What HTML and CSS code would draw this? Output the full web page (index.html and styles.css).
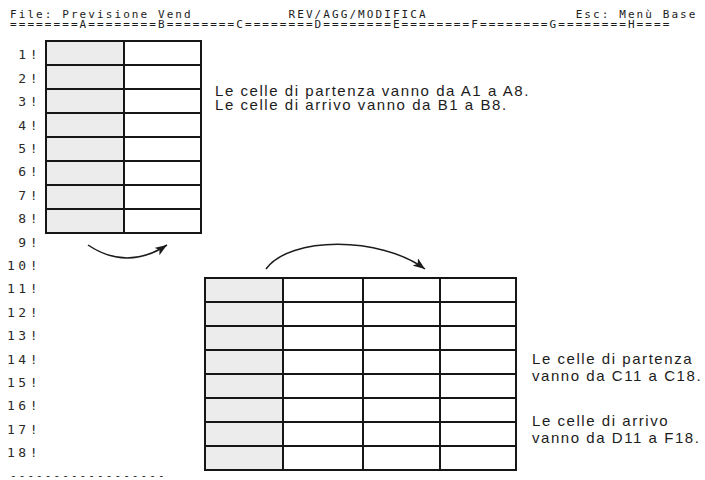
FILE: index.html
```html
<!DOCTYPE html>
<html lang="it">
<head>
  <meta charset="UTF-8">
  <meta name="viewport" content="width=device-width, initial-scale=1.0">
  <title>Previsione Vend - REV/AGG/MODIFICA</title>
  <link rel="stylesheet" href="styles.css">
</head>
<body>
  <!-- Status line and column ruler -->
  <header class="topbar">
    <div class="status">File: Previsione Vend           REV/AGG/MODIFICA                 Esc: Menù Base</div>
    <div class="ruler">========A========B========C========D========E========F========G========H====</div>
  </header>

  <div class="main">
    <!-- Row numbers -->
    <div class="rows">
      <div>1!</div><div>2!</div><div>3!</div><div>4!</div><div>5!</div><div>6!</div>
      <div>7!</div><div>8!</div><div>9!</div><div>10!</div><div>11!</div><div>12!</div>
      <div>13!</div><div>14!</div><div>15!</div><div>16!</div><div>17!</div><div>18!</div>
    </div>

    <div class="sheet">
      <!-- First example: A1:A8 -> B1:B8 -->
      <div class="upper">
        <div class="grid grid-ab">
          <div class="src"></div><div></div>
          <div class="src"></div><div></div>
          <div class="src"></div><div></div>
          <div class="src"></div><div></div>
          <div class="src"></div><div></div>
          <div class="src"></div><div></div>
          <div class="src"></div><div></div>
          <div class="src"></div><div></div>
        </div>
        <p class="note">Le celle di partenza vanno da A1 a A8.<br>Le celle di arrivo vanno da B1 a B8.</p>
      </div>

      <svg class="arrows" viewBox="0 0 472 43" xmlns="http://www.w3.org/2000/svg">
        <defs>
          <marker id="head" markerUnits="userSpaceOnUse" markerWidth="13" markerHeight="9" refX="12" refY="4.5" orient="auto">
            <path d="M0,0 L12,4.5 L0,9 L3,4.5 z" fill="#1c1c1c"/>
          </marker>
        </defs>
        <path d="M43 11 Q82 37 122 11" fill="none" stroke="#1c1c1c" stroke-width="1.5" marker-end="url(#head)"/>
        <path d="M221 35 C245 2 335 2 380 35" fill="none" stroke="#1c1c1c" stroke-width="1.5" marker-end="url(#head)"/>
      </svg>

      <!-- Second example: C11:C18 -> D11:F18 -->
      <div class="lower">
        <div class="grid grid-cf">
          <div class="src"></div><div></div><div></div><div></div>
          <div class="src"></div><div></div><div></div><div></div>
          <div class="src"></div><div></div><div></div><div></div>
          <div class="src"></div><div></div><div></div><div></div>
          <div class="src"></div><div></div><div></div><div></div>
          <div class="src"></div><div></div><div></div><div></div>
          <div class="src"></div><div></div><div></div><div></div>
          <div class="src"></div><div></div><div></div><div></div>
        </div>
        <div class="note-right">
          <p>Le celle di partenza<br>vanno da C11 a C18.</p>
          <p>Le celle di arrivo<br>vanno da D11 a F18.</p>
        </div>
      </div>
    </div>
  </div>

  <div class="footer">------------------</div>
</body>
</html>
```

FILE: styles.css
```css
body {
  margin: 0;
  width: 705px;
  height: 480px;
  overflow: hidden;
  background: #fff;
  color: #1c1c1c;
  font-family: "DejaVu Sans Mono", monospace;
}

.topbar {
  padding: 10px 0 0 10px;
  font-size: 11px;
  line-height: 10px;
  letter-spacing: 2.08px;
}

.status,
.ruler {
  height: 10px;
  white-space: pre;
}

.main {
  display: flex;
  margin-top: 10px;
}

.rows {
  width: 45px;
  padding: 3.3px 4px 0 0;
  box-sizing: border-box;
  text-align: right;
  font-size: 13px;
  line-height: 23.4px;
  letter-spacing: 3.5px;
  color: #2a2a2a;
}

.sheet {
  flex: 1;
  font-family: "Liberation Sans", Arial, sans-serif;
}

.upper,
.lower {
  display: flex;
  align-items: flex-start;
}

.grid {
  display: grid;
  padding: 2px;
  gap: 2px;
  background: #161616;
  grid-auto-rows: 22px;
}

.grid div {
  background: #fff;
}

.grid .src {
  background: #ececec;
}

.grid-ab {
  grid-template-columns: 76px 75px;
}

.grid-cf {
  grid-template-columns: 76px 78px 75px 74px;
  margin-left: 159px;
}

.note {
  margin: 43.5px 0 0 13px;
  font-size: 15px;
  line-height: 14px;
  letter-spacing: 1.55px;
  white-space: nowrap;
}

.arrows {
  display: block;
  width: 472px;
  height: 43px;
}

.note-right {
  margin: 72.5px 0 0 15px;
  font-size: 15px;
  line-height: 17px;
  letter-spacing: 1.55px;
  white-space: nowrap;
}

.note-right p {
  margin: 0;
}

.note-right p + p {
  margin-top: 28px;
}

.footer {
  padding-left: 10px;
  font-size: 11px;
  line-height: 10px;
  letter-spacing: 2.08px;
  white-space: pre;
}
```
